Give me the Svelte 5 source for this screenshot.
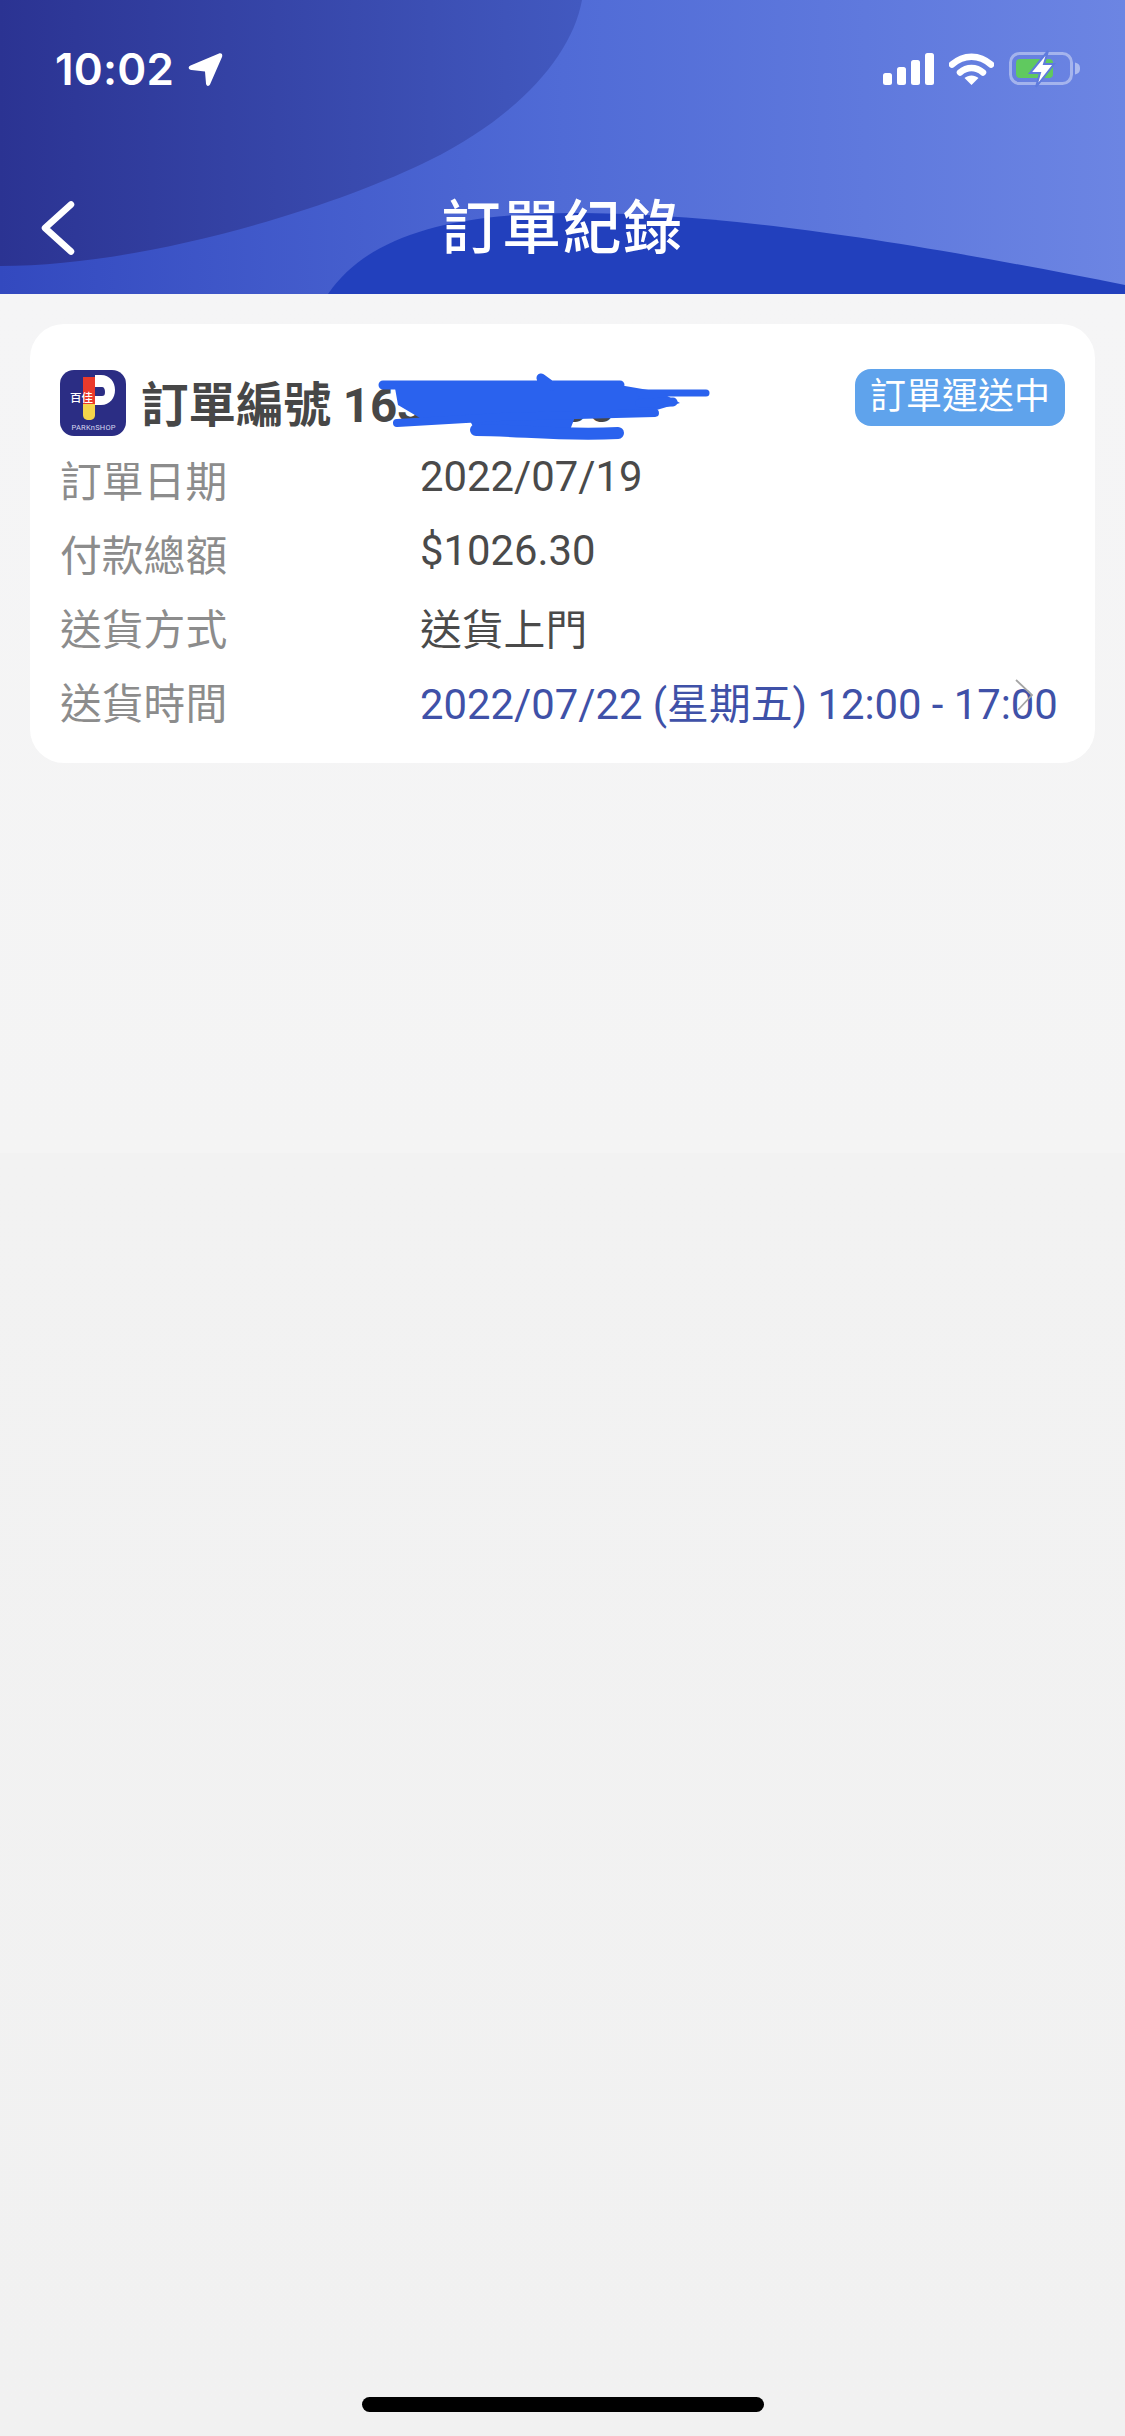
<script>
  const rows = [
    { label: "訂單日期", value: "2022/07/19", latin: true },
    { label: "付款總額", value: "$1026.30", latin: true },
    { label: "送貨方式", value: "送貨上門" },
    { label: "送貨時間", value: "2022/07/22 (星期五) 12:00 - 17:00", link: true }
  ];
</script>

<div class="page">
  <header class="head">
    <svg class="waves" viewBox="0 0 1125 294" preserveAspectRatio="none" aria-hidden="true">
      <defs>
        <linearGradient id="base" x1="0" x2="1" y1="0" y2="0">
          <stop offset="0" stop-color="#3349bf" />
          <stop offset="0.5" stop-color="#506bd6" />
          <stop offset="1" stop-color="#6c85e3" />
        </linearGradient>
        <linearGradient id="dark" x1="0" x2="1" y1="0" y2="0">
          <stop offset="0" stop-color="#2b3392" />
          <stop offset="1" stop-color="#4259c0" />
        </linearGradient>
      </defs>
      <rect width="1125" height="294" fill="url(#base)" />
      <path d="M0 0H582C572 55 520 115 430 160C340 205 150 266 0 266Z" fill="url(#dark)" />
      <path d="M328 294C365 240 440 213 574 213C700 213 860 232 1125 285V294Z" fill="#2240bd" />
    </svg>

    <div class="status">
      <div class="clock">
        <span>10:02</span>
        <svg width="35" height="35" viewBox="0 0 35 35" aria-hidden="true">
          <path d="M31 1.500 2.500 13.500c-3 1.500-2 4.500 1 4.500L17 19.500 18 31.500c.3 3 3 3 4 1L34 5c1-3-1-4.500-3-3.500Z" fill="#fff" />
        </svg>
      </div>
      <div class="indicators">
        <svg width="51" height="32" viewBox="0 0 51 32" aria-hidden="true">
          <rect x="0" y="20" width="9" height="12" rx="2.500" fill="#fff" />
          <rect x="14" y="14" width="9" height="18" rx="2.500" fill="#fff" />
          <rect x="28" y="7" width="9" height="25" rx="2.500" fill="#fff" />
          <rect x="42" y="0" width="9" height="32" rx="2.500" fill="#fff" />
        </svg>
        <svg width="45" height="32" viewBox="0 0 45 32" aria-hidden="true">
          <path d="M3 11.500C14.500 1 30.500 1 42 11.500" fill="none" stroke="#fff" stroke-width="6.500" stroke-linecap="round" />
          <path d="M11 19.500c7-6 16-6 23 0" fill="none" stroke="#fff" stroke-width="6.500" stroke-linecap="round" />
          <path d="M15.500 25c4-3.500 10-3.500 14 0l-7 7Z" fill="#fff" />
        </svg>
        <svg class="battery" width="74" height="36" viewBox="0 0 74 36" aria-hidden="true">
          <rect x="1.500" y="2.500" width="61" height="30" rx="9" fill="none" stroke="#fff" stroke-opacity="0.4" stroke-width="3" />
          <path d="M66 11.500c4 1 5 3 5 6s-1 5-5 6Z" fill="#fff" fill-opacity="0.45" />
          <rect x="7" y="8" width="37" height="19" rx="4" fill="#60c95f" />
          <path d="M39 0 21 22H31L27 36 45 13H35Z" fill="#fff" stroke="#5f7bdd" stroke-width="2" />
        </svg>
      </div>
    </div>

    <nav class="nav">
      <button class="back" aria-label="back">
        <svg width="34" height="54" viewBox="0 0 34 54" aria-hidden="true">
          <path d="M30 3.500 4 27l26 23.500" fill="none" stroke="#fff" stroke-width="6.500" stroke-linecap="round" stroke-linejoin="round" />
        </svg>
      </button>
      <h1>訂單紀錄</h1>
    </nav>
  </header>

  <main class="content">
    <section class="card">
      <div class="top">
        <svg class="logo" viewBox="0 0 66 66" role="img" aria-label="PARKnSHOP">
          <rect width="66" height="66" rx="14" fill="#2b2d84" />
          <path d="M23 7H35V34H23Z" fill="#ea3a2c" />
          <path d="M23 34H35V45C35 48 33 50 29 50S23 48 23 45Z" fill="#f6d44a" />
          <path d="M35 5H41C50 5 55 12 55 20S50 35 41 35H35V26H42C44 26 45 25 45 22C45 19 44 17 42 17H35Z" fill="#fff" />
          <text x="21.500" y="31.500" class="logo-cn">百佳</text>
          <text x="33.500" y="60" class="logo-en" textLength="44">PARKnSHOP</text>
        </svg>
        <span class="order">訂單編號 1630000000</span>
        <span class="badge">訂單運送中</span>
        <svg class="scribble" viewBox="0 0 350 75" aria-hidden="true">
          <path d="M25 18 255 16 290 22 310 33 280 42 205 47 200 60 105 60 100 51 50 48 28 35Z" fill="#2a62ee" />
          <path d="M13 15H250M171 8 182 16M270 33 303 32" fill="none" stroke="#2a62ee" stroke-width="9" stroke-linecap="round" />
          <path d="M270 23H336" fill="none" stroke="#2a62ee" stroke-width="7" stroke-linecap="round" />
          <path d="M27 53 130 47 285 43" fill="none" stroke="#2a62ee" stroke-width="8" stroke-linecap="round" stroke-linejoin="round" />
          <path d="M106 60C150 60 190 66 248 63" fill="none" stroke="#2a62ee" stroke-width="12" stroke-linecap="round" />
        </svg>
      </div>

      <dl class="rows">
        {#each rows as row}
          <dt>{row.label}</dt>
          <dd class:link={row.link} class:latin={row.latin}>{row.value}</dd>
        {/each}
        <svg class="chevron" width="20" height="32" viewBox="0 0 20 32" aria-hidden="true">
          <path d="M2 1 18 16 4 31" fill="none" stroke="#a5a5a5" stroke-width="1.800" />
        </svg>
      </dl>
    </section>
  </main>

  <div class="home"></div>
</div>

<style>
  :global(body) {
    margin: 0;
    background: #f1f1f1;
  }

  .page {
    position: relative;
    height: 2436px;
    overflow: hidden;
    display: flex;
    flex-direction: column;
    font-family: Roboto, "Noto Sans CJK TC", sans-serif;
    background: linear-gradient(#f5f5f6 294px, #f4f4f4 1153px, #f2f2f2 1153px, #f1f1f1 2436px);
  }

  .head {
    position: relative;
    height: 294px;
    flex: none;
    color: #fff;
  }

  .waves {
    position: absolute;
    inset: 0;
    width: 100%;
    height: 100%;
  }

  .status {
    position: relative;
    display: flex;
    justify-content: space-between;
    align-items: center;
    height: 36px;
    padding: 51px 42px 0 55px;
  }

  .clock {
    display: flex;
    align-items: center;
    gap: 14px;
    font-family: Inter, sans-serif;
    font-size: 44px;
    font-weight: 600;
    letter-spacing: 0.2px;
  }

  .indicators {
    display: flex;
    align-items: center;
    gap: 15px;
  }

  .battery {
    overflow: visible;
  }

  .nav {
    position: relative;
    display: flex;
    justify-content: center;
    align-items: center;
    height: 70px;
    margin-top: 106px;
  }

  .back {
    position: absolute;
    left: 41px;
    top: 8px;
    padding: 0;
    border: 0;
    background: none;
    line-height: 0;
  }

  h1 {
    margin: 2px 0 0;
    font-size: 59px;
    font-weight: 500;
    line-height: 70px;
    letter-spacing: 1.500px;
  }

  .content {
    padding: 30px 30px 0;
  }

  .card {
    box-sizing: border-box;
    height: 439px;
    padding: 46px 30px 0 30px;
    background: #fff;
    border-radius: 34px;
  }

  .top {
    position: relative;
    display: flex;
    align-items: center;
    height: 66px;
  }

  .logo {
    width: 66px;
    height: 66px;
    flex: none;
  }

  .logo-cn {
    font-size: 11.500px;
    font-weight: 500;
    fill: #fff;
    text-anchor: middle;
  }

  .logo-en {
    font-size: 7.500px;
    fill: #d8d9f0;
    text-anchor: middle;
  }

  .order {
    margin: -4px 0 0 15px;
    font-size: 47.500px;
    font-weight: 700;
    color: #474747;
    white-space: nowrap;
  }

  .badge {
    position: absolute;
    right: 0;
    top: -1px;
    width: 210px;
    height: 57px;
    padding-bottom: 9px;
    box-sizing: border-box;
    display: flex;
    justify-content: center;
    align-items: center;
    font-size: 36px;
    color: #fff;
    background: #5fa3ec;
    border-radius: 16px;
  }

  .scribble {
    position: absolute;
    left: 310px;
    top: 0;
    width: 350px;
    height: 75px;
  }

  .rows {
    position: relative;
    display: grid;
    grid-template-columns: 360px 1fr;
    grid-auto-rows: 74px;
    margin: 13px 0 0;
    font-size: 41.800px;
  }

  dt {
    color: #8c8c8c;
  }

  dd {
    margin: 0;
    color: #4a4a4a;
    white-space: nowrap;
  }

  dd.latin {
    padding-top: 3px;
  }

  dd.link {
    color: #3f51a8;
  }

  .chevron {
    position: absolute;
    right: 31px;
    top: 230px;
  }

  .home {
    position: absolute;
    left: 362px;
    top: 2397px;
    width: 402px;
    height: 15px;
    background: #000;
    border-radius: 8px;
  }
</style>
